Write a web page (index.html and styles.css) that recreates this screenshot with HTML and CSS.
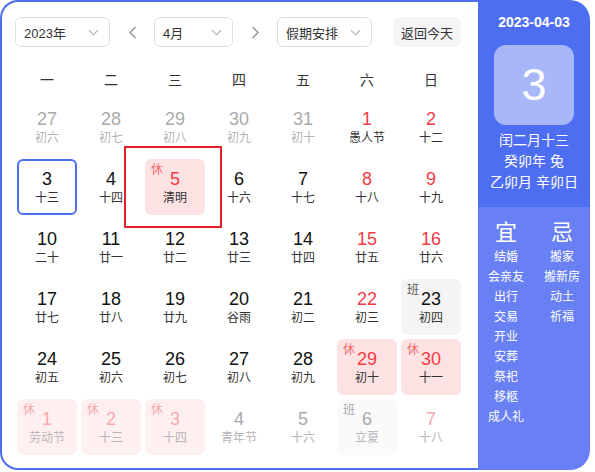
FILE: index.html
```html
<!DOCTYPE html>
<html lang="zh">
<head>
<meta charset="utf-8">
<link rel="stylesheet" href="styles.css">
</head>
<body>
<div class="cal">
  <div class="main">
    <div class="toolbar">
      <div class="select w95"><span>2023年</span><svg class="chev" viewBox="0 0 12 7"><path d="M1 1 L6 6 L11 1"/></svg></div>
      <div class="arrow"><svg viewBox="0 0 9 13"><path d="M7.5 1 L2 6.5 L7.5 12"/></svg></div>
      <div class="select w79"><span>4月</span><svg class="chev" viewBox="0 0 12 7"><path d="M1 1 L6 6 L11 1"/></svg></div>
      <div class="arrow"><svg viewBox="0 0 9 13"><path d="M1.5 1 L7 6.5 L1.5 12"/></svg></div>
      <div class="select w95"><span>假期安排</span><svg class="chev" viewBox="0 0 12 7"><path d="M1 1 L6 6 L11 1"/></svg></div>
      <div class="btn">返回今天</div>
    </div>
    <div class="week">
      <span>一</span><span>二</span><span>三</span><span>四</span><span>五</span><span>六</span><span>日</span>
    </div>
    <div class="grid">
      <div class="cell other"><div class="box"><span class="num">27</span><span class="lunar">初六</span></div></div>
      <div class="cell other"><div class="box"><span class="num">28</span><span class="lunar">初七</span></div></div>
      <div class="cell other"><div class="box"><span class="num">29</span><span class="lunar">初八</span></div></div>
      <div class="cell other"><div class="box"><span class="num">30</span><span class="lunar">初九</span></div></div>
      <div class="cell other"><div class="box"><span class="num">31</span><span class="lunar">初十</span></div></div>
      <div class="cell red"><div class="box"><span class="num">1</span><span class="lunar">愚人节</span></div></div>
      <div class="cell red"><div class="box"><span class="num">2</span><span class="lunar">十二</span></div></div>

      <div class="cell today"><div class="box"><span class="num">3</span><span class="lunar">十三</span></div></div>
      <div class="cell"><div class="box"><span class="num">4</span><span class="lunar">十四</span></div></div>
      <div class="cell red rest"><div class="box"><span class="tag">休</span><span class="num">5</span><span class="lunar">清明</span></div></div>
      <div class="cell"><div class="box"><span class="num">6</span><span class="lunar">十六</span></div></div>
      <div class="cell"><div class="box"><span class="num">7</span><span class="lunar">十七</span></div></div>
      <div class="cell red"><div class="box"><span class="num">8</span><span class="lunar">十八</span></div></div>
      <div class="cell red"><div class="box"><span class="num">9</span><span class="lunar">十九</span></div></div>

      <div class="cell"><div class="box"><span class="num">10</span><span class="lunar">二十</span></div></div>
      <div class="cell"><div class="box"><span class="num">11</span><span class="lunar">廿一</span></div></div>
      <div class="cell"><div class="box"><span class="num">12</span><span class="lunar">廿二</span></div></div>
      <div class="cell"><div class="box"><span class="num">13</span><span class="lunar">廿三</span></div></div>
      <div class="cell"><div class="box"><span class="num">14</span><span class="lunar">廿四</span></div></div>
      <div class="cell red"><div class="box"><span class="num">15</span><span class="lunar">廿五</span></div></div>
      <div class="cell red"><div class="box"><span class="num">16</span><span class="lunar">廿六</span></div></div>

      <div class="cell"><div class="box"><span class="num">17</span><span class="lunar">廿七</span></div></div>
      <div class="cell"><div class="box"><span class="num">18</span><span class="lunar">廿八</span></div></div>
      <div class="cell"><div class="box"><span class="num">19</span><span class="lunar">廿九</span></div></div>
      <div class="cell"><div class="box"><span class="num">20</span><span class="lunar">谷雨</span></div></div>
      <div class="cell"><div class="box"><span class="num">21</span><span class="lunar">初二</span></div></div>
      <div class="cell red"><div class="box"><span class="num">22</span><span class="lunar">初三</span></div></div>
      <div class="cell work"><div class="box"><span class="tag">班</span><span class="num">23</span><span class="lunar">初四</span></div></div>

      <div class="cell"><div class="box"><span class="num">24</span><span class="lunar">初五</span></div></div>
      <div class="cell"><div class="box"><span class="num">25</span><span class="lunar">初六</span></div></div>
      <div class="cell"><div class="box"><span class="num">26</span><span class="lunar">初七</span></div></div>
      <div class="cell"><div class="box"><span class="num">27</span><span class="lunar">初八</span></div></div>
      <div class="cell"><div class="box"><span class="num">28</span><span class="lunar">初九</span></div></div>
      <div class="cell red rest"><div class="box"><span class="tag">休</span><span class="num">29</span><span class="lunar">初十</span></div></div>
      <div class="cell red rest"><div class="box"><span class="tag">休</span><span class="num">30</span><span class="lunar">十一</span></div></div>

      <div class="cell other red rest"><div class="box"><span class="tag">休</span><span class="num">1</span><span class="lunar">劳动节</span></div></div>
      <div class="cell other red rest"><div class="box"><span class="tag">休</span><span class="num">2</span><span class="lunar">十三</span></div></div>
      <div class="cell other red rest"><div class="box"><span class="tag">休</span><span class="num">3</span><span class="lunar">十四</span></div></div>
      <div class="cell other"><div class="box"><span class="num">4</span><span class="lunar">青年节</span></div></div>
      <div class="cell other"><div class="box"><span class="num">5</span><span class="lunar">十六</span></div></div>
      <div class="cell other work"><div class="box"><span class="tag">班</span><span class="num">6</span><span class="lunar">立夏</span></div></div>
      <div class="cell other red"><div class="box"><span class="num">7</span><span class="lunar">十八</span></div></div>
    </div>
  </div>
  <div class="side">
    <div class="side-top">
      <div class="date">2023-04-03</div>
      <div class="big">3</div>
      <div class="info">
        <div>闰二月十三</div>
        <div>癸卯年 兔</div>
        <div>乙卯月 辛卯日</div>
      </div>
    </div>
    <div class="side-bottom">
      <div class="col">
        <div class="head">宜</div>
        <div>结婚</div><div>会亲友</div><div>出行</div><div>交易</div><div>开业</div><div>安葬</div><div>祭祀</div><div>移柩</div><div>成人礼</div>
      </div>
      <div class="col">
        <div class="head">忌</div>
        <div>搬家</div><div>搬新房</div><div>动土</div><div>祈福</div>
      </div>
    </div>
  </div>
</div>
<div class="mark"></div>
</body>
</html>
```
FILE: styles.css
```css
* { box-sizing: border-box; }
html, body { margin: 0; padding: 0; background: #fff; }
body {
  font-family: "Liberation Sans", "Noto Sans CJK SC", sans-serif;
  color: #333;
  position: relative;
  width: 595px;
  height: 472px;
  overflow: hidden;
}
.cal {
  display: flex;
  width: 590px;
  height: 470px;
}
.main {
  width: 478px;
  height: 470px;
  border: 2px solid #4e6ef2;
  border-right: 0;
  border-radius: 18px 0 0 18px;
  padding: 15px 0 0 13px;
}
.toolbar {
  display: flex;
  align-items: center;
  height: 30px;
}
.select {
  height: 30px;
  border: 1px solid #dcdfe6;
  border-radius: 6px;
  display: flex;
  align-items: center;
  justify-content: space-between;
  padding: 0 10px 0 8px;
  font-size: 13px;
  color: #333;
}
.w95 { width: 95px; }
.w79 { width: 79px; }
.chev { width: 11px; height: 7px; }
.chev path { fill: none; stroke: #a8abb2; stroke-width: 1.1; }
.arrow {
  width: 44px;
  height: 30px;
  display: flex;
  align-items: center;
  justify-content: center;
}
.arrow svg { width: 9px; height: 13px; }
.arrow path { fill: none; stroke: #909399; stroke-width: 1.4; }
.btn {
  margin-left: 21px;
  width: 68px;
  height: 30px;
  border-radius: 6px;
  background: #f4f4f5;
  display: flex;
  align-items: center;
  justify-content: center;
  font-size: 13px;
  color: #333;
}
.week {
  display: grid;
  grid-template-columns: repeat(7, 64px);
  height: 36px;
  margin-top: 14px;
  align-items: center;
  font-size: 14px;
  color: #333;
}
.week span { text-align: center; }
.grid {
  display: grid;
  grid-template-columns: repeat(7, 64px);
  grid-auto-rows: 60px;
}
.cell { padding: 2px; }
.box {
  position: relative;
  height: 56px;
  border-radius: 6px;
  display: flex;
  flex-direction: column;
  align-items: center;
  justify-content: center;
  border: 2px solid transparent;
}
.num {
  font-size: 18px;
  line-height: 22px;
  color: #111;
}
.lunar {
  font-size: 12px;
  line-height: 16px;
  color: #333;
}
.tag {
  position: absolute;
  left: 4px;
  top: 2px;
  font-size: 12px;
  line-height: 14px;
  color: #f56c6c;
}
.red .num { color: #f53a45; }
.rest .box { background: #fde2e4; }
.work .box { background: #f4f4f5; }
.work .tag { color: #555; }
.today .box { border-color: #4e6ef2; }
.other .num { color: #aaa; }
.other .lunar { color: #b5b5b5; }
.other.red .num { color: #f9a8ab; }
.other.rest .box { background: #fef0f0; }
.other.rest .tag { color: #f9a8ab; }
.other.work .box { background: #fafafa; }
.other.work .tag { color: #aaa; }
.side {
  width: 112px;
  height: 470px;
  border-radius: 0 20px 20px 0;
  overflow: hidden;
  display: flex;
  flex-direction: column;
  color: #fff;
}
.side-top {
  height: 207px;
  background: #4e6ef2;
  display: flex;
  flex-direction: column;
  align-items: center;
  padding-top: 12px;
}
.date {
  font-size: 14px;
  line-height: 20px;
  font-weight: bold;
}
.big {
  margin-top: 13px;
  width: 80px;
  height: 80px;
  border-radius: 12px;
  background: rgba(255, 255, 255, 0.5);
  display: flex;
  align-items: center;
  justify-content: center;
  font-size: 45px;
}
.info {
  margin-top: 5px;
  font-size: 14px;
  line-height: 21px;
  text-align: center;
}
.side-bottom {
  flex: 1;
  background: #6880f3;
  display: flex;
  padding-top: 12px;
}
.col {
  width: 56px;
  text-align: center;
  font-size: 12px;
  line-height: 20px;
}
.col .head {
  font-size: 22px;
  line-height: 28px;
}
.mark {
  position: absolute;
  left: 124px;
  top: 146px;
  width: 98px;
  height: 82px;
  border: 2px solid #e5202a;
}
```
